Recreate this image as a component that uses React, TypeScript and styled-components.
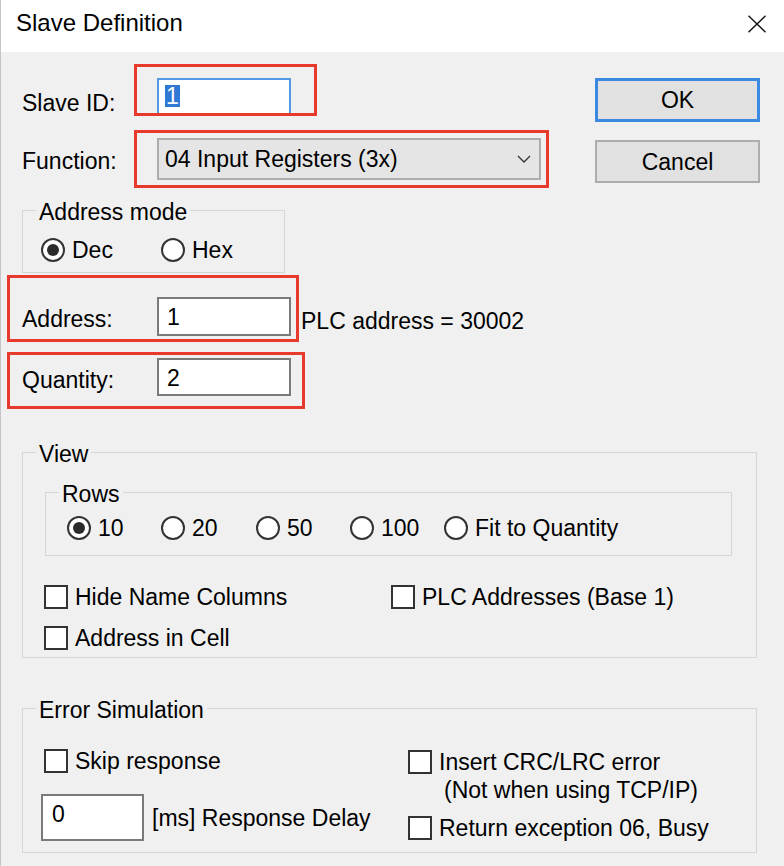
import React from "react";
import styled, { createGlobalStyle } from "styled-components";

const Global = createGlobalStyle`
  html, body { margin: 0; padding: 0; background: #f0f0f0; }
  body { font-family: "Liberation Sans", Arial, sans-serif; }
  * { box-sizing: border-box; }
`;

const Window = styled.div`
  width: 784px;
  height: 866px;
  overflow: hidden;
  background: #f0f0f0;
  border-left: 1px solid #c4c4c4;
  display: flex;
  flex-direction: column;
  font-family: "Liberation Sans", Arial, sans-serif;
  font-size: 23px;
  color: #000;
`;

const TitleBar = styled.div`
  height: 52px;
  flex: none;
  background: #fff;
  display: flex;
  align-items: flex-start;
  justify-content: space-between;
  padding: 9px 17px 0 15px;
`;

const Title = styled.div`
  font-size: 24px;
  line-height: 28px;
`;

const CloseGlyph = styled.svg`
  margin-top: 6px;
  display: block;
`;

const Body = styled.div`
  position: relative;
  flex: 1;
  padding: 0 27px 0 21px;
`;

const TopArea = styled.div`
  display: flex;
  align-items: flex-start;
`;

const LeftCol = styled.div`
  flex: 1;
  display: flex;
  flex-direction: column;
  align-items: flex-start;
`;

const FieldRow = styled.div<{ $mt: number; $h: number }>`
  display: flex;
  align-items: flex-start;
  margin-top: ${(p) => p.$mt}px;
  height: ${(p) => p.$h}px;
`;

const FieldLabel = styled.div<{ $pt: number }>`
  width: 135px;
  flex: none;
  line-height: 26px;
  padding-top: ${(p) => p.$pt}px;
  white-space: nowrap;
`;

const TextBox = styled.div<{ $w: number; $h: number; $pt: number; $pl: number; $focused?: boolean }>`
  width: ${(p) => p.$w}px;
  height: ${(p) => p.$h}px;
  flex: none;
  background: #fff;
  border: 2px solid ${(p) => (p.$focused ? "#5299e6" : "#7a7a7a")};
  padding: ${(p) => p.$pt}px 0 0 ${(p) => p.$pl}px;
  line-height: 26px;
`;

const Selected = styled.span`
  display: inline-block;
  background: #3078d6;
  color: #fff;
  line-height: 22px;
  padding: 0 1px;
`;

const Combo = styled.div`
  width: 384px;
  height: 42px;
  flex: none;
  background: #e5e5e5;
  border: 2px solid #adadad;
  display: flex;
  align-items: center;
  justify-content: space-between;
  padding: 0 8px 0 6px;
  line-height: 26px;
`;

const SideText = styled.div`
  margin-left: 10px;
  padding-top: 11px;
  line-height: 26px;
  white-space: nowrap;
`;

const ButtonCol = styled.div`
  width: 165px;
  flex: none;
  margin: 26px -3px 0 0;
  display: flex;
  flex-direction: column;
  gap: 18px;
`;

const Button = styled.div<{ $default?: boolean; $h: number }>`
  height: ${(p) => p.$h}px;
  background: #e1e1e1;
  border: ${(p) => (p.$default ? "3px solid #3a8ae2" : "2px solid #adadad")};
  display: flex;
  align-items: center;
  justify-content: center;
  line-height: 26px;
`;

const Group = styled.div<{ $mt: number; $ml?: number; $w?: number; $pb: number }>`
  border: 1px solid #d6d6d6;
  margin-top: ${(p) => p.$mt}px;
  margin-left: ${(p) => p.$ml ?? 0}px;
  width: ${(p) => (p.$w ? `${p.$w}px` : "auto")};
  align-self: ${(p) => (p.$w ? "flex-start" : "stretch")};
  padding-bottom: ${(p) => p.$pb}px;
  display: flex;
  flex-direction: column;
  align-items: flex-start;
`;

const Caption = styled.div`
  margin: -12px 0 0 13px;
  padding: 0 3px;
  background: #f0f0f0;
  line-height: 26px;
  white-space: nowrap;
`;

const RadioRow = styled.div<{ $mt: number; $pl: number }>`
  display: flex;
  margin-top: ${(p) => p.$mt}px;
  padding-left: ${(p) => p.$pl}px;
`;

const RadioItem = styled.div<{ $w?: number }>`
  display: flex;
  align-items: center;
  gap: 7px;
  width: ${(p) => (p.$w ? `${p.$w}px` : "auto")};
  flex: none;
  line-height: 26px;
  white-space: nowrap;
`;

const RadioCircle = styled.span`
  width: 24px;
  height: 24px;
  flex: none;
  border-radius: 50%;
  border: 2px solid #333;
  background: #fff;
  display: flex;
  align-items: center;
  justify-content: center;
`;

const RadioDot = styled.span`
  width: 12px;
  height: 12px;
  border-radius: 50%;
  background: #2b2b2b;
`;

const CheckGrid = styled.div`
  display: grid;
  grid-template-columns: 347px auto;
  row-gap: 15px;
  margin-top: 28px;
  padding-left: 21px;
`;

const CheckItem = styled.div<{ $mt?: number; $ml?: number; $lh?: number }>`
  display: flex;
  align-items: flex-start;
  gap: 7px;
  margin-top: ${(p) => p.$mt ?? 0}px;
  margin-left: ${(p) => p.$ml ?? 0}px;
  line-height: ${(p) => p.$lh ?? 26}px;
  white-space: nowrap;
`;

const CheckBox = styled.span<{ $mt: number }>`
  width: 24px;
  height: 24px;
  flex: none;
  margin-top: ${(p) => p.$mt}px;
  border: 2px solid #333;
  background: #fff;
`;

const IndentLine = styled.div`
  padding-left: 5px;
`;

const ErrorColumns = styled.div`
  display: flex;
  margin-top: 25px;
  padding-left: 18px;
`;

const ErrorLeft = styled.div`
  width: 367px;
  display: flex;
  flex-direction: column;
  align-items: flex-start;
`;

const ErrorRight = styled.div`
  display: flex;
  flex-direction: column;
  align-items: flex-start;
`;

const DelayRow = styled.div`
  display: flex;
  align-items: center;
  gap: 8px;
  margin-top: 20px;
  line-height: 26px;
  white-space: nowrap;
`;

const Mark = styled.div<{ $x: number; $y: number; $w: number; $h: number }>`
  position: absolute;
  left: ${(p) => p.$x}px;
  top: ${(p) => p.$y}px;
  width: ${(p) => p.$w}px;
  height: ${(p) => p.$h}px;
  border: 3px solid #e8392d;
  pointer-events: none;
`;

const Radio = ({ label, checked, w }: { label: string; checked?: boolean; w?: number }) => (
  <RadioItem $w={w}>
    <RadioCircle>{checked && <RadioDot />}</RadioCircle>
    <span>{label}</span>
  </RadioItem>
);

const Check = ({ label, mt, ml }: { label: string; mt?: number; ml?: number }) => (
  <CheckItem $mt={mt} $ml={ml}>
    <CheckBox $mt={1} />
    <span>{label}</span>
  </CheckItem>
);

export default function App() {
  return (
    <>
      <Global />
      <Window>
        <TitleBar>
          <Title>Slave Definition</Title>
          <CloseGlyph width="20" height="18" viewBox="0 0 20 18">
            <path d="M1.5 0.8 L18.5 17.2 M18.5 0.8 L1.5 17.2" stroke="#111" strokeWidth="1.4" fill="none" />
          </CloseGlyph>
        </TitleBar>
        <Body>
          <TopArea>
            <LeftCol>
              <FieldRow $mt={26} $h={37}>
                <FieldLabel $pt={12}>Slave ID:</FieldLabel>
                <TextBox $w={134} $h={37} $pt={3} $pl={6} $focused>
                  <Selected>1</Selected>
                </TextBox>
              </FieldRow>
              <FieldRow $mt={23} $h={42}>
                <FieldLabel $pt={10}>Function:</FieldLabel>
                <Combo>
                  <span>04 Input Registers (3x)</span>
                  <svg width="14" height="8" viewBox="0 0 14 8">
                    <path d="M1 1 L7 7 L13 1" stroke="#333" strokeWidth="1.3" fill="none" />
                  </svg>
                </Combo>
              </FieldRow>
              <Group $mt={30} $w={263} $pb={9}>
                <Caption>Address mode</Caption>
                <RadioRow $mt={12} $pl={18}>
                  <Radio label="Dec" checked w={120} />
                  <Radio label="Hex" />
                </RadioRow>
              </Group>
              <FieldRow $mt={24} $h={39}>
                <FieldLabel $pt={9}>Address:</FieldLabel>
                <TextBox $w={134} $h={39} $pt={5} $pl={8}>1</TextBox>
                <SideText>PLC address = 30002</SideText>
              </FieldRow>
              <FieldRow $mt={22} $h={38}>
                <FieldLabel $pt={9}>Quantity:</FieldLabel>
                <TextBox $w={134} $h={38} $pt={5} $pl={8}>2</TextBox>
              </FieldRow>
            </LeftCol>
            <ButtonCol>
              <Button $default $h={44}>OK</Button>
              <Button $h={43}>Cancel</Button>
            </ButtonCol>
          </TopArea>

          <Group $mt={56} $pb={6}>
            <Caption>View</Caption>
            <Group $mt={25} $ml={22} $w={687} $pb={14}>
              <Caption>Rows</Caption>
              <RadioRow $mt={8} $pl={21}>
                <Radio label="10" checked w={94} />
                <Radio label="20" w={95} />
                <Radio label="50" w={94} />
                <Radio label="100" w={94} />
                <Radio label="Fit to Quantity" />
              </RadioRow>
            </Group>
            <CheckGrid>
              <Check label="Hide Name Columns" />
              <Check label="PLC Addresses (Base 1)" />
              <Check label="Address in Cell" />
            </CheckGrid>
          </Group>

          <Group $mt={50} $pb={11}>
            <Caption>Error Simulation</Caption>
            <ErrorColumns>
              <ErrorLeft>
                <Check label="Skip response" ml={3} />
                <DelayRow>
                  <TextBox $w={103} $h={47} $pt={5} $pl={9}>0</TextBox>
                  <span>[ms] Response Delay</span>
                </DelayRow>
              </ErrorLeft>
              <ErrorRight>
                <CheckItem $lh={28}>
                  <CheckBox $mt={2} />
                  <div>
                    <div>Insert CRC/LRC error</div>
                    <IndentLine>(Not when using TCP/IP)</IndentLine>
                  </div>
                </CheckItem>
                <Check label="Return exception 06, Busy" mt={11} />
              </ErrorRight>
            </ErrorColumns>
          </Group>

          <Mark $x={133} $y={12} $w={183} $h={52} />
          <Mark $x={133} $y={78} $w={415} $h={58} />
          <Mark $x={6} $y={223} $w={292} $h={67} />
          <Mark $x={6} $y={300} $w={298} $h={57} />
        </Body>
      </Window>
    </>
  );
}
